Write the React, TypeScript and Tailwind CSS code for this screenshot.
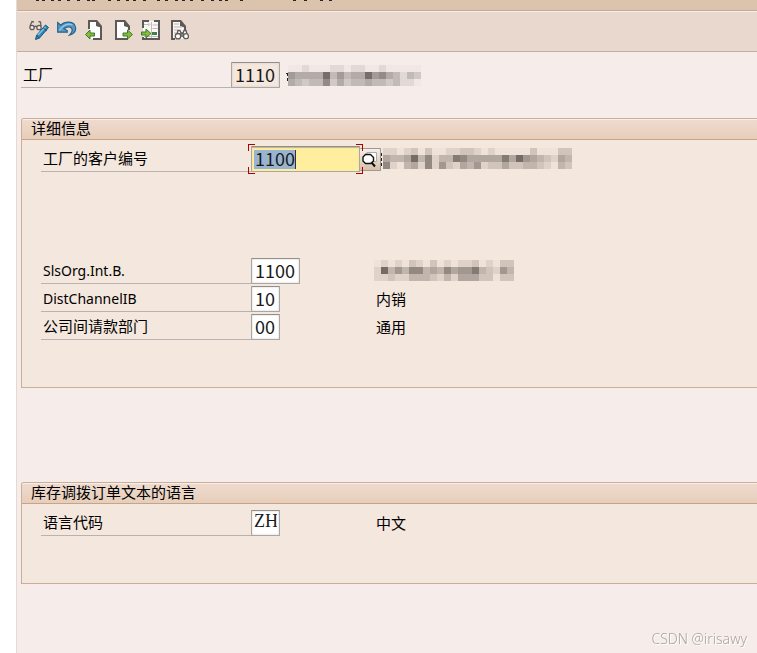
import { useState } from "react";
import type { ReactNode } from "react";

const cjk = "font-['Noto_Sans','Noto_Sans_CJK_SC',sans-serif]";

function ToolButton({ label, children }: { label: string; children: ReactNode }) {
  return (
    <button type="button" aria-label={label} className="h-5 w-5 shrink-0">
      <svg viewBox="0 0 20 20" className="block h-5 w-5" aria-hidden="true">
        {children}
      </svg>
    </button>
  );
}

const arrowRight = "M0 3.5H4.5V.5L9.5 5L4.5 9.5V6.5H0Z";
const arrowLeft = "M9.5 3.5H5V.5L.5 5L5 9.5V6.5H9.5Z";

function Toolbar() {
  return (
    <div className="flex h-[41px] items-center gap-2 border-t border-b border-t-[#f8ece5] border-b-[#c4aea2] bg-[#e8d8ce] pb-[3px] pl-3">
      <ToolButton label="显示/更改">
        <g fill="none" stroke="#625e5b" strokeWidth="1.3">
          <circle cx="3" cy="7.5" r="2.2" fill="#eee7e2" />
          <circle cx="10" cy="7.5" r="2.2" fill="#eee7e2" />
          <path d="M1 6L3 1.5L5 2M5 7Q6.5 5.5 8 7M12 6L11.5 2L9.5 1.5" />
        </g>
        <path d="M16.5 5L19.5 7.5L10.5 18L6.5 19.5L7.5 15.5Z" fill="#2f87b8" stroke="#17567e" />
        <path d="M9 15L16.5 7" stroke="#8ac6e2" strokeWidth="1.3" />
        <path d="M14 7.5L18 11M7.5 15.5L10.5 18" stroke="#17567e" />
      </ToolButton>
      <ToolButton label="撤消">
        <path
          d="M.7 2.5V12.2H10.3V10.8L7 8.5Q11 5.8 14 7.5Q17 10.3 12.5 15.2Q18.7 13.5 18.7 8.3Q18 2.5 12 2.2Q7 2 3.8 5.2Z"
          fill="#5899c6"
          stroke="#23658f"
          strokeWidth="1.2"
        />
        <path d="M2.2 10.5L6.5 6Q11 2.8 15.5 5" fill="none" stroke="#9dcae3" strokeWidth="1.2" />
      </ToolButton>
      <ToolButton label="上一条目">
        <path d="M4 1H12L16 6V19H4Z" fill="#fff" />
        <path d="M4 9V1H11M16 6V19H8" fill="none" stroke="#5d5957" strokeWidth="2" />
        <path d="M11 0H12L17 6V8L11 6Z" fill="#5d5957" />
        <path d={arrowLeft} transform="translate(0 9.5)" fill="#88bd33" stroke="#387a31" />
      </ToolButton>
      <ToolButton label="下一条目">
        <path d="M3 1H12L16 6V19H3Z" fill="#fff" />
        <path d="M11 1H3V19H15M16 6V10" fill="none" stroke="#5d5957" strokeWidth="2" />
        <path d="M11 0H12L17 6V8L11 6Z" fill="#5d5957" />
        <path d={arrowRight} transform="translate(10 9.5)" fill="#88bd33" stroke="#387a31" />
      </ToolButton>
      <ToolButton label="其他条目">
        <path d="M2 1H18V19H2Z" fill="#faf8f6" />
        <path d="M8 1H2V8M2 17V19H18V1H13" fill="none" stroke="#5d5957" strokeWidth="2" />
        <path d="M3 4.5H8M7 2.5L9 4.5L7 6.5M11.5 5H17M11.5 8.5H17M3 16.5H17M10.5 2V18" fill="none" stroke="#c2bdb9" />
        <path d="M11 12H16V15H11Z" fill="#3c804b" />
        <path d={arrowRight} transform="translate(.5 8.5)" fill="#88bd33" stroke="#387a31" />
      </ToolButton>
      <ToolButton label="打印字段清单">
        <path d="M3 1H12L16 6V19H3Z" fill="#f8f5f2" />
        <path d="M11 1H3V19H6M16 6V10" fill="none" stroke="#5d5957" strokeWidth="2" />
        <path d="M11 0H12L17 6V8L11 6Z" fill="#5d5957" />
        <path d="M5 4H10M5 7H13M5 10H9M5 13H7" stroke="#bbb5b0" strokeWidth="1.2" />
        <g fill="#fff" stroke="#5f5b58" strokeWidth="1.3">
          <path d="M8 14L9 10.5H11L12 13H14L15 10.5H17L18 14" />
          <circle cx="9" cy="16.2" r="2.7" />
          <circle cx="17" cy="16.2" r="2.5" />
          <path d="M11 14H15M12 16H14" />
        </g>
      </ToolButton>
    </div>
  );
}

const titleMarks = [36, 42, 51, 58, 67, 77, 87, 92, 108, 117, 126, 133, 143, 157, 165, 175, 182, 190, 201, 211, 219, 225, 240, 293, 304, 320, 329];

function TitleBar() {
  return (
    <div className="h-[11px] border-b border-[#c4aa98] bg-[#dcc3ad]">
      <svg className="block h-[2px] w-80" aria-hidden="true" shapeRendering="crispEdges">
        {titleMarks.map((x) => (
          <rect key={x} x={x - 17} width="3" height="1" fill="#2c221c" />
        ))}
      </svg>
    </div>
  );
}

function Mosaic({ rows, glyph }: { rows: string[]; glyph?: string }) {
  const width = rows[0].length * 7;
  return (
    <svg width={width + 2} height="21" className="block shrink-0" shapeRendering="crispEdges" aria-hidden="true">
      {glyph && <path d={glyph} stroke="#222" fill="none" />}
      {rows.flatMap((row, y) =>
        row.split("").map((level, x) => (
          <rect key={`${x}-${y}`} x={x * 7 + 2} y={y * 7} width="7" height="7" fill="#3b3431" opacity={(Number(level) + 0.3) / 12} />
        )),
      )}
    </svg>
  );
}

const plantName = [
  "0010001101100100000",
  "5444483534485643132",
  "4323362423343323110",
];
const customerName = [
  "110120200112210100000200022",
  "433483613376444447485432143",
  "610341615214351224223321032",
];
const salesOrgName = [
  "01010210201011201022",
  "18353663436455732153",
  "11211333213144422022",
];

function FieldLabel({ id, children }: { id: string; children: ReactNode }) {
  return (
    <label htmlFor={id} className="flex w-[210px] shrink-0 items-center border-b border-[#b9b2b0] pb-px pl-[2px] text-[15px] leading-5">
      {children}
    </label>
  );
}

const fieldBase = "h-[26px] rounded-[1px] border border-[#aaa6a4] border-t-[#918e8c] pb-[3px] leading-5 text-[#1a1a1a] outline-none";
const digits = "font-['Noto_Sans_CJK_SC',sans-serif] px-[3px] text-[18px]";
const letters = "font-['Liberation_Serif',serif] px-[2px] text-[18px]";

function Field({ id, initial, size, tone = "bg-white" }: { id: string; initial: string; size: string; tone?: string }) {
  const [value, setValue] = useState(initial);
  return (
    <input
      id={id}
      value={value}
      onChange={(e) => setValue(e.target.value)}
      className={`${fieldBase} ${size} ${tone} block shadow-[inset_0_0_2px_#c8c5c3]`}
    />
  );
}

function CustomerField() {
  const [value, setValue] = useState("1100");
  return (
    <div className="flex items-center">
      <div className="relative h-[26px] w-[109px] bg-[#ffee9d]">
        <span className="absolute top-1 left-[3px] h-[19px] w-[42px] border-r border-[#333] bg-[#99b4d1]" />
        <input
          id="customer"
          value={value}
          onChange={(e) => setValue(e.target.value)}
          className={`${fieldBase} ${digits} relative block w-full bg-transparent shadow-[inset_0_1px_1px_#bdb58d]`}
        />
        <span className="absolute -top-[2px] -left-[3px] h-[7px] w-[7px] border-t border-l border-[#b00000]" />
        <span className="absolute -top-[2px] -right-[3px] h-[7px] w-[7px] border-t border-r border-[#b00000]" />
        <span className="absolute -bottom-[2px] -left-[3px] h-[7px] w-[7px] border-b border-l border-[#b00000]" />
        <span className="absolute -right-[3px] -bottom-[2px] h-[7px] w-[7px] border-r border-b border-[#b00000]" />
      </div>
      <button
        type="button"
        aria-label="搜索帮助"
        className="h-[23px] w-[21px] rounded-[1px] border-t border-r border-b border-[#9d9995] bg-gradient-to-b from-[#f6eee9] to-[#d8c0aa]"
      >
        <svg viewBox="0 0 20 20" className="block h-5 w-5" aria-hidden="true">
          <path d="M7 3.5H16.5V12.5H7Z" fill="#fff" stroke="#aaa" />
          <path d="M5.5 5.5H10.5L13.5 8.5V12L10.5 14.5H5.5L3 12V8Z" fill="#fff" stroke="#111" strokeWidth="1.4" />
          <path d="M11.5 13.5L15 17.5" stroke="#111" strokeWidth="2" />
        </svg>
      </button>
    </div>
  );
}

function Panel({ title, children }: { title: string; children: ReactNode }) {
  return (
    <section className="rounded-tl-[3px] border-t border-b border-l border-[#ccae98] bg-[#f4e7dd]">
      <h2 className="h-[21px] rounded-tl-[2px] border-t border-b border-t-[#f9eee6] border-b-[#c6a38b] bg-gradient-to-b from-[#eedace] to-[#e7ceba] pl-[9px] text-[15px] leading-4">
        {title}
      </h2>
      <div className="flex flex-col gap-[2px] pt-[6px] pb-[47px] pl-[19px]">{children}</div>
    </section>
  );
}

function Row({ id, label, field, children }: { id: string; label: ReactNode; field: ReactNode; children: ReactNode }) {
  return (
    <div className="flex h-[26px]">
      <FieldLabel id={id}>{label}</FieldLabel>
      <div className="min-w-[125px] shrink-0">{field}</div>
      <div className="flex items-center pb-px text-[15px] leading-5">{children}</div>
    </div>
  );
}

export default function App() {
  return (
    <div className={`flex min-h-screen bg-white pl-4 text-black ${cjk}`}>
      <main className="min-w-0 flex-1 overflow-hidden border-l border-[#e5dad3] bg-[#f6edea]">
        <TitleBar />
        <Toolbar />
        <div className="pt-[10px] pl-1">
          <div className="mb-[30px] flex h-[26px] items-center">
            <div className="flex h-full">
              <FieldLabel id="plant">工厂</FieldLabel>
            </div>
            <Field id="plant" initial="1110" size={`w-[49px] ${digits}`} tone="bg-[#f4e7dd]" />
            <div className="pl-[6px]">
              <Mosaic rows={plantName} glyph="M0 8.5H2M1.5 8V11M1.5 13V16" />
            </div>
          </div>

          <Panel title="详细信息">
            <Row id="customer" label="工厂的客户编号" field={<CustomerField />}>
              <Mosaic rows={customerName} glyph="M.5 5V8M.5 10V13M.5 15V18" />
            </Row>
            <div className="h-[82px]" />
            <Row
              id="sales-org"
              label={<span className="pt-[2px] text-[14px]">SlsOrg.Int.B.</span>}
              field={<Field id="sales-org" initial="1100" size={`w-[49px] ${digits}`} />}
            >
              <div className="-ml-1">
                <Mosaic rows={salesOrgName} />
              </div>
            </Row>
            <Row
              id="channel"
              label={<span className="pt-[2px] text-[14px]">DistChannelIB</span>}
              field={<Field id="channel" initial="10" size={`w-[29px] ${digits}`} />}
            >
              内销
            </Row>
            <Row id="division" label="公司间请款部门" field={<Field id="division" initial="00" size={`w-[29px] ${digits}`} />}>
              通用
            </Row>
          </Panel>

          <div className="h-[94px]" />

          <Panel title="库存调拨订单文本的语言">
            <Row
              id="language"
              label="语言代码"
              field={<Field id="language" initial="ZH" size={`w-[29px] ${letters}`} />}
            >
              中文
            </Row>
          </Panel>
        </div>
      </main>
      <p className="fixed right-[10px] bottom-1 text-[14px] leading-5 font-light text-[#aaa3a0] [text-shadow:1px_1px_0_#fff]">
        CSDN @irisawy
      </p>
    </div>
  );
}
